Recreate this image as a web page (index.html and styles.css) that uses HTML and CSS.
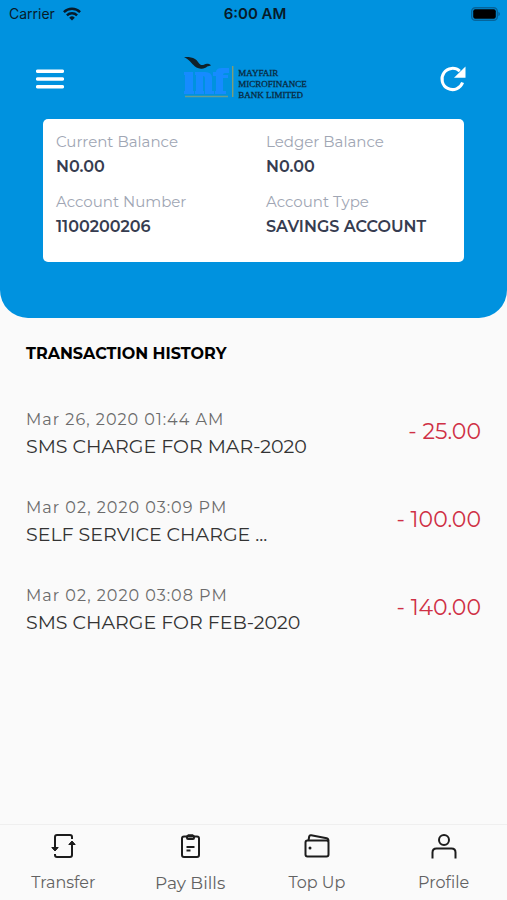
FILE: index.html
```html
<!DOCTYPE html>
<html lang="en">
<head>
<meta charset="utf-8">
<meta name="viewport" content="width=device-width, initial-scale=1">
<title>Mayfair Microfinance Bank</title>
<link rel="stylesheet" href="styles.css">
</head>
<body>
<header class="hero">
  <div class="status">
    <span class="carrier">Carrier
      <svg width="18" height="14" viewBox="0 0 18 14" aria-hidden="true"><g fill="none" stroke="#071b2a" stroke-width="2.4"><path d="M.9 5.1a11.6 11.6 0 0 1 16.2 0"/><path d="M3.9 8.4a7.3 7.3 0 0 1 10.2 0"/></g><path d="M9 13.6 6.2 10.7a4 4 0 0 1 5.6 0z" fill="#071b2a"/></svg>
    </span>
    <span class="clock">6:00 AM</span>
    <svg class="battery" width="30" height="14" viewBox="0 0 30 14" aria-hidden="true"><rect x=".7" y=".7" width="25.6" height="12.6" rx="3.6" fill="none" stroke="#05649b" stroke-width="1.4"/><rect x="2.2" y="2.2" width="22.6" height="9.6" rx="2" fill="#000"/><path d="M27.3 4.8c2.2.8 2.2 3.6 0 4.4z" fill="#05649b"/></svg>
  </div>
  <div class="topbar">
    <button class="icon-button" type="button" aria-label="Menu">
      <svg width="28" height="20" viewBox="0 0 28 20"><path d="M1.6 2.3h24.8M1.6 10h24.8M1.6 17.7h24.8" stroke="#fff" stroke-width="3.4" stroke-linecap="round"/></svg>
    </button>
    <div class="brand">
      <svg width="50" height="48" viewBox="0 0 50 48" aria-hidden="true">
        <g fill="#168bff"><path d="M0 17h9v19h1v3H0v-3h1V20H0zM11 17h10q7 0 7 6v13h2v3h-9V23q0-2-2-2v15h1v3h-9v-3h1V20h-1zM31 39v-3h1V21h-3v-4h3q0-4 6-4h7v5h-4q-2 0-2 2h5v3h-5v13h3v3z"/></g>
        <path d="M1 41.500h43" stroke="#659f91" stroke-width="1.300"/>
        <path d="M0 2c4-.2 8 0 11 2 2.500 1.500 3.500 4.500 6 6 2.500.5 3.500-1 6-1.300 1.500 0 2.600.4 4 1.600-1.200 1-2.500.8-3.800 1.200-1.700 1.500-3.700 2.500-6.200 2.200-3.500-.4-6-1.700-7.800-3.900C7 7.500 5 4.500 0 2z" fill="#10212a"/>
        <path d="M48.700 11v31" stroke="#819e73" stroke-width="1.400"/>
      </svg>
      <div class="brand-name">MAYFAIR<br>MICROFINANCE<br>BANK LIMITED</div>
    </div>
    <button class="icon-button" type="button" aria-label="Refresh">
      <svg width="28" height="28" viewBox="0 0 28 28"><path d="M23.600 17.500A10.600 10.600 0 1 1 20.800 6.200" fill="none" stroke="#fff" stroke-width="3"/><path d="M26.500 1.500v11.300H15z" fill="#fff"/></svg>
    </button>
  </div>
  <dl class="account">
    <div><dt>Current Balance</dt><dd>N0.00</dd></div>
    <div><dt>Ledger Balance</dt><dd>N0.00</dd></div>
    <div><dt>Account Number</dt><dd>1100200206</dd></div>
    <div><dt>Account Type</dt><dd>SAVINGS ACCOUNT</dd></div>
  </dl>
</header>
<main class="history">
  <h1>TRANSACTION HISTORY</h1>
  <ul class="transactions">
    <li><div><time datetime="2020-03-26T01:44">Mar 26, 2020 01:44 AM</time><p>SMS CHARGE FOR MAR-2020</p></div><span class="amount">- 25.00</span></li>
    <li><div><time datetime="2020-03-02T15:09">Mar 02, 2020 03:09 PM</time><p>SELF SERVICE CHARGE ...</p></div><span class="amount">- 100.00</span></li>
    <li><div><time datetime="2020-03-02T15:08">Mar 02, 2020 03:08 PM</time><p>SMS CHARGE FOR FEB-2020</p></div><span class="amount">- 140.00</span></li>
  </ul>
</main>
<nav class="tabs">
  <a href="#transfer"><svg width="28" height="28" viewBox="0 0 28 28"><path d="M6 15V5q0-2 2-2h13q2 0 2 2v2M23 12v11q0 2-2 2H8q-2 0-2-2v-1"/><path class="head" d="M2.800 15.500h6.400L6 19zM19.800 12.500h6.400L23 9z"/></svg>Transfer</a>
  <a class="wide" href="#bills"><svg width="28" height="28" viewBox="0 0 28 28"><rect x="6" y="4.500" width="17" height="20.500" rx="2"/><path d="M11 4.500v1.500q0 1 1 1h5q1 0 1-1V4.500l-1.500-1.300h-4zM10.500 15h8M10.500 18.500h4"/></svg>Pay Bills</a>
  <a href="#topup"><svg width="28" height="28" viewBox="0 0 28 28"><rect x="2.500" y="8.500" width="23" height="16" rx="2"/><path d="M5.500 8.500 6.200 4.500q.3-1.500 2-1.200l15.500 3q1.800.5 1.800 3"/><circle class="dot" cx="7" cy="16" r="1.500"/></svg>Top Up</a>
  <a href="#profile"><svg width="28" height="28" viewBox="0 0 28 28"><circle cx="14" cy="8" r="5"/><path d="M2.500 26.500v-6q0-4 4-4h15q4 0 4 4v6"/></svg>Profile</a>
</nav>
</body>
</html>
```
FILE: styles.css
```css
* { box-sizing: border-box; }
body {
  margin: 0;
  min-height: 100vh;
  display: flex;
  flex-direction: column;
  background: #fafafa;
  color: #333;
  font-family: Montserrat, Inter, sans-serif;
}
svg { display: block; flex: none; }
.hero {
  background: #0092df;
  border-radius: 0 0 28px 28px;
  padding-bottom: 56px;
}
.status {
  display: grid;
  grid-template-columns: 1fr auto 1fr;
  align-items: center;
  height: 27px;
  padding: 0 6px 0 9px;
  color: #071b2a;
  font: 14px/20px Inter, sans-serif;
}
.carrier { display: flex; align-items: center; gap: 8px; }
.clock { font-size: 15px; font-weight: 600; }
.battery { justify-self: end; }
.topbar {
  display: flex;
  align-items: center;
  justify-content: space-between;
  height: 92px;
  padding: 12px 40px 0 36px;
}
.icon-button { padding: 0; border: 0; background: none; }
.brand { display: flex; align-items: center; gap: 4px; margin-right: 12px; }
.brand-name {
  padding-top: 10px;
  color: #092b42;
  font: 9px/11px "Liberation Serif", serif;
  -webkit-text-stroke: 0.3px #092b42;
}
.account {
  display: grid;
  grid-template-columns: 1fr 1fr;
  gap: 10px 12px;
  margin: 0 43px;
  padding: 12px 0 21px 13px;
  background: #fff;
  border-radius: 5px;
}
.account dt { color: #a0a6b4; font-size: 15px; line-height: 22px; }
.account dd { margin: 0; color: #363c50; font-size: 16px; font-weight: 600; line-height: 28px; }
.history { flex: 1; padding: 25px 26px; }
h1 { margin: 0; color: #000; font-size: 16px; font-weight: 700; line-height: 22px; }
.transactions {
  display: grid;
  gap: 34px;
  margin: 0;
  padding: 42px 0 0;
  list-style: none;
}
.transactions li { display: flex; justify-content: space-between; }
time { display: block; color: #6b6b6b; font-size: 16px; line-height: 26px; letter-spacing: 1px; }
.transactions p { margin: 0; font-size: 19px; line-height: 28px; }
.amount { color: #cf3045; font-size: 22px; line-height: 50px; }
.tabs {
  display: grid;
  grid-template-columns: repeat(4, 1fr);
  height: 76px;
  border-top: 1px solid #efefef;
}
.tabs a {
  display: flex;
  flex-direction: column;
  align-items: center;
  gap: 11px;
  padding-top: 7px;
  color: #626262;
  font-size: 16px;
  line-height: 24px;
  text-decoration: none;
}
.tabs .wide { font-size: 17px; }
.tabs svg { fill: none; stroke: #1c1c1c; stroke-width: 2; }
.tabs .head { fill: #1c1c1c; stroke-width: 1; }
.tabs .dot { fill: #1c1c1c; stroke: none; }
```
